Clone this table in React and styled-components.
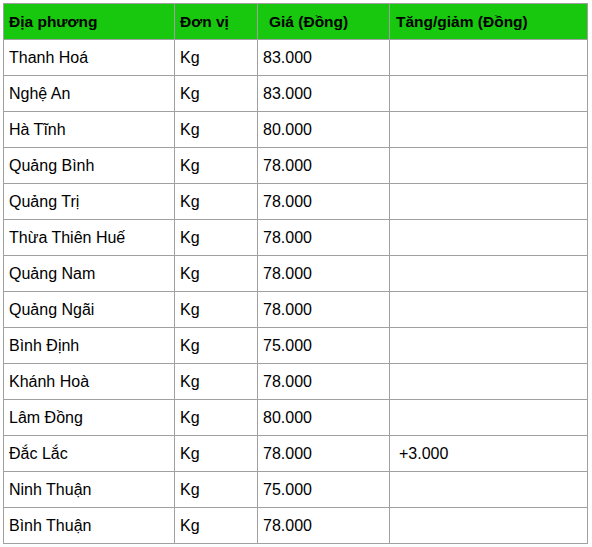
import React from "react";
import styled, { createGlobalStyle } from "styled-components";

const rows = [
	["Thanh Hoá", "Kg", "83.000", ""],
	["Nghệ An", "Kg", "83.000", ""],
	["Hà Tĩnh", "Kg", "80.000", ""],
	["Quảng Bình", "Kg", "78.000", ""],
	["Quảng Trị", "Kg", "78.000", ""],
	["Thừa Thiên Huế", "Kg", "78.000", ""],
	["Quảng Nam", "Kg", "78.000", ""],
	["Quảng Ngãi", "Kg", "78.000", ""],
	["Bình Định", "Kg", "75.000", ""],
	["Khánh Hoà", "Kg", "78.000", ""],
	["Lâm Đồng", "Kg", "80.000", ""],
	["Đắc Lắc", "Kg", "78.000", "+3.000"],
	["Ninh Thuận", "Kg", "75.000", ""],
	["Bình Thuận", "Kg", "78.000", ""],
];

const columns = [
	{ title: "Địa phương", width: 171, indent: 5 },
	{ title: "Đơn vị", width: 83, indent: 5 },
	{ title: "Giá (Đồng)", width: 132, indent: 11, cellIndent: 5 },
	{ title: "Tăng/giảm (Đồng)", width: 198, indent: 6, cellIndent: 9 },
];

const GlobalStyle = createGlobalStyle`
	body {
		margin: 0;
		background: white;
		font-family: "Liberation Sans", Arial, sans-serif;
		color: #000;
	}
`;

const Page = styled.div`
	padding: 3px;
`;

const Table = styled.table`
	border-collapse: collapse;
	table-layout: fixed;
	width: 585px;
	border: 1px solid #a0a0a0;
`;

const HeadCell = styled.th`
	background: #17c80e;
	border: 1px solid #a0a0a0;
	height: 35px;
	padding: 0 0 0 ${props => props.$indent}px;
	text-align: left;
	font-size: 15.5px;
	font-weight: bold;
`;

const Cell = styled.td`
	border: 1px solid #a0a0a0;
	height: 35px;
	padding: 0 4px 0 ${props => props.$indent || 5}px;
	font-size: 16px;
`;

export default function App() {
	return (
		<Page>
			<GlobalStyle />
			<Table>
				<colgroup>
					{columns.map((c, i) => <col key={i} style={{ width: c.width }} />)}
				</colgroup>
				<thead>
					<tr>
						{columns.map((c, i) => (
							<HeadCell key={i} $indent={c.indent}>{c.title}</HeadCell>
						))}
					</tr>
				</thead>
				<tbody>
					{rows.map((r, i) => (
						<tr key={i}>
							{r.map((v, j) => (
								<Cell key={j} $indent={columns[j].cellIndent}>{v}</Cell>
							))}
						</tr>
					))}
				</tbody>
			</Table>
		</Page>
	);
}
